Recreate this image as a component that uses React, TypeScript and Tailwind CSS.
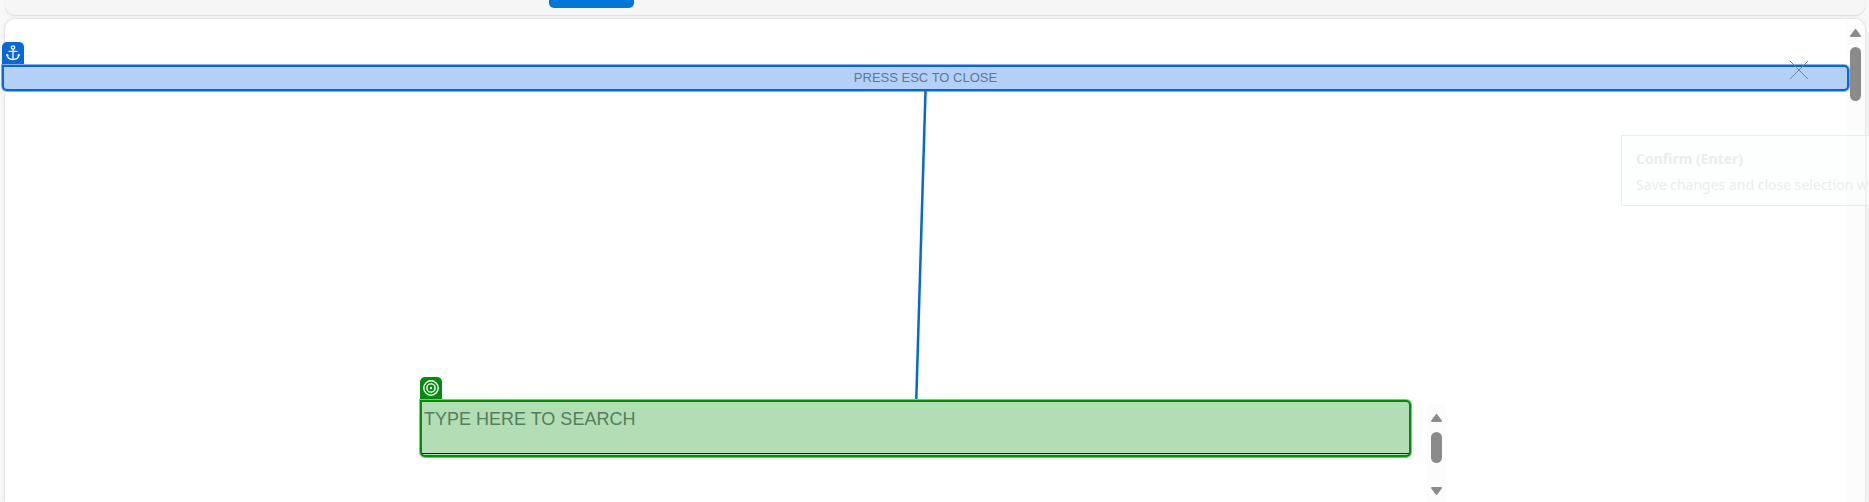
import React from "react";

function Arrow({ down = false }: { down?: boolean }) {
  return (
    <svg width="11" height="8" viewBox="0 0 11 8" fill="#8b8b8b" aria-hidden="true">
      {down ? (
        <path d="M1 0h9c.9 0 1.2.8.8 1.400L6.500 7.300c-.5.8-1.500.8-2 0L.2 1.400C-.2.8.1 0 1 0Z" />
      ) : (
        <path d="M1 8h9c.9 0 1.200-.8.8-1.400L6.500.7c-.5-.8-1.500-.8-2 0L.2 6.600C-.2 7.200.1 8 1 8Z" />
      )}
    </svg>
  );
}

function AnchorMark() {
  return (
    <svg width="14" height="16" viewBox="0 0 14 16" fill="none" stroke="#fff" strokeWidth="1.3" aria-hidden="true">
      <circle cx="7" cy="2.500" r="1.700" />
      <path d="M7 4.200V15M2.500 6.300h9" />
      <path d="M1 9.200c.3 3.300 2.500 5.200 6 5.400 3.500-.2 5.700-2.100 6-5.400" strokeWidth="1.5" />
      <path d="M.4 11 1 9l1.800 1.500M13.600 11 13 9l-1.800 1.500" strokeWidth="0.8" />
    </svg>
  );
}

function TargetMark() {
  return (
    <svg width="16" height="16" viewBox="0 0 16 16" fill="none" stroke="#fff" strokeWidth="1.4" aria-hidden="true">
      <circle cx="8" cy="8" r="7.200" />
      <circle cx="8" cy="8" r="4.100" />
      <circle cx="8" cy="8" r="1.200" fill="#fff" stroke="none" />
    </svg>
  );
}

export default function App() {
  return (
    <div className="flex h-screen flex-col gap-[3px] overflow-hidden bg-[#f7f7f7] pr-1 pl-[5px] font-['Liberation_Sans',Arial,sans-serif]">
      <header className="flex h-4 shrink-0 items-start rounded-b-[10px] border-b border-[#e0e0e0] bg-[#f6f6f6] pl-[544px] shadow-[0_0_1px_#cccccc]">
        <button type="button" aria-label="Apply" className="h-2 w-[85px] rounded-b-[5px] bg-[#0078d7]" />
      </header>

      <main className="relative flex flex-1 rounded-t-[10px] bg-white shadow-[0_0_3px_#c8c8c8]">
        <div className="relative flex min-w-0 flex-1 flex-col pt-[46px]">
          <section className="relative z-10 -mx-[3px] flex h-[26px] shrink-0 items-center justify-center rounded-b-[5px] rounded-tr-[5px] border-2 border-[#0068e0] bg-[#b3d1f5] ring-1 ring-[#0068e0]/50">
            <div className="absolute -top-[25px] -left-[2px] flex h-[22px] w-[22px] items-center justify-center rounded-t-[5px] bg-[#0068e0]">
              <AnchorMark />
            </div>
            <p className="text-[13px] leading-4 text-[#5877a0]">PRESS ESC TO CLOSE</p>
            <button type="button" aria-label="Close" className="absolute -top-[7px] right-[38px] size-5">
              <svg width="20" height="20" viewBox="0 0 20 20" stroke="#6b83a3" strokeWidth="1" aria-hidden="true">
                <path d="m1 1 18 18M19 1 1 19" />
              </svg>
            </button>
          </section>

          <svg className="h-[308px] w-full shrink-0" aria-hidden="true">
            <line x1="50%" y1="0" x2="49.5%" y2="308" stroke="#0068e0" strokeWidth="2.500" />
          </svg>

          <div className="mr-[400px] ml-[415px] flex items-start gap-4">
            <section className="relative mt-px h-[57px] min-w-0 flex-1 rounded-b-[5px] rounded-tr-[5px] border-2 border-[#008c0a] bg-[#b3ddb5] pb-px ring-1 ring-[#008c0a]/50">
              <div className="absolute -top-[25px] -left-[2px] flex h-[22px] w-[22px] items-center justify-center rounded-t-[5px] bg-[#008c0a]">
                <TargetMark />
              </div>
              <input
                type="text"
                aria-label="Search"
                placeholder="TYPE HERE TO SEARCH"
                className="block h-full w-full border-b border-[#102c12] bg-transparent px-[2px] pb-4 text-[18px] leading-5 outline-none placeholder:text-[#51805a]"
              />
            </section>
            <div className="mt-[5px] flex h-[98px] w-[19px] flex-col items-center bg-[#fcfcfc] pt-[10px]">
              <Arrow />
              <div className="mt-[10px] mb-6 h-[31px] w-[11px] rounded-full bg-[#8b8b8b]" />
              <Arrow down />
            </div>
          </div>
        </div>

        <div className="flex w-[19px] shrink-0 flex-col items-center rounded-tr-[10px] bg-[#fcfcfc] pt-[10px]">
          <Arrow />
          <div className="mt-[10px] h-[54px] w-[11px] rounded-full bg-[#8b8b8b]" />
        </div>

        <aside className="absolute top-[116px] -right-1 h-[71px] w-[248px] overflow-hidden border-y border-l border-[#ededed] bg-[#f8fffc]/40 py-3 pl-[14px] font-['Noto_Sans',sans-serif] text-[14px] whitespace-nowrap text-[#ececec]">
          <h2 className="leading-[22px] font-bold">Confirm (Enter)</h2>
          <p className="mt-1 leading-[22px]">Save changes and close selection w</p>
        </aside>
      </main>
    </div>
  );
}
